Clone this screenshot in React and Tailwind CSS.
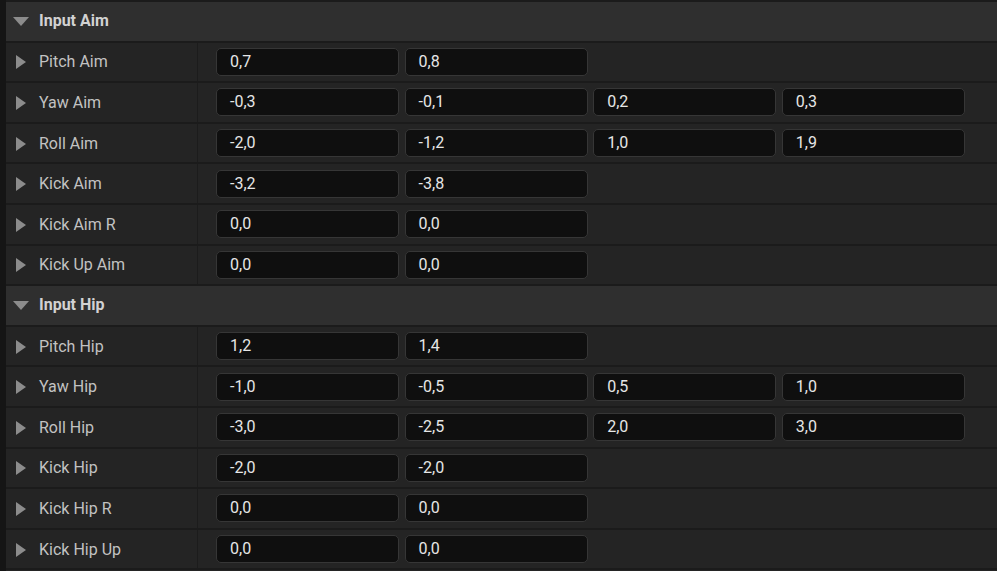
import React from "react";

const sections = [
  {
    title: "Input Aim",
    rows: [
      ["Pitch Aim", ["0,7", "0,8"]],
      ["Yaw Aim", ["-0,3", "-0,1", "0,2", "0,3"]],
      ["Roll Aim", ["-2,0", "-1,2", "1,0", "1,9"]],
      ["Kick Aim", ["-3,2", "-3,8"]],
      ["Kick Aim R", ["0,0", "0,0"]],
      ["Kick Up Aim", ["0,0", "0,0"]],
    ],
  },
  {
    title: "Input Hip",
    rows: [
      ["Pitch Hip", ["1,2", "1,4"]],
      ["Yaw Hip", ["-1,0", "-0,5", "0,5", "1,0"]],
      ["Roll Hip", ["-3,0", "-2,5", "2,0", "3,0"]],
      ["Kick Hip", ["-2,0", "-2,0"]],
      ["Kick Hip R", ["0,0", "0,0"]],
      ["Kick Hip Up", ["0,0", "0,0"]],
    ],
  },
];

function ArrowRight() {
  return (
    <svg width="10" height="14" viewBox="0 0 10 14" className="shrink-0">
      <path d="M0 0 L10 7 L0 14 Z" fill="#8c8c8c" />
    </svg>
  );
}

function ArrowDown() {
  return (
    <svg width="16" height="9" viewBox="0 0 16 9" className="shrink-0">
      <path d="M0 0 L16 0 L8 9 Z" fill="#8c8c8c" />
    </svg>
  );
}

function NumberBox({ value }) {
  return (
    <div className="w-[183px] h-[28px] shrink-0 rounded-[5px] border border-[#363636] bg-[#0f0f0f] flex items-center pl-[13px] text-[16px] text-[#e6e6e6]">
      {value}
    </div>
  );
}

function SectionHeader({ title }) {
  return (
    <div className="h-[40.6px] shrink-0 bg-[#2f2f2f] border-b-2 border-[#1b1b1b] flex items-center pl-[7px]">
      <ArrowDown />
      <span className="ml-[10px] text-[16px] font-bold text-[#d2d2d2]">{title}</span>
    </div>
  );
}

function PropertyRow({ label, values }) {
  return (
    <div className="h-[40.6px] shrink-0 bg-[#242424] border-b-2 border-[#1b1b1b] flex">
      <div className="w-[192px] shrink-0 flex items-center pl-[10px] pt-px border-r border-[#1c1c1c]">
        <ArrowRight />
        <span className="ml-[13px] text-[16px] text-[#c2c2c2]">{label}</span>
      </div>
      <div className="flex items-center gap-[5.6px] pl-[18px]">
        {values.map((v, i) => (
          <NumberBox key={i} value={v} />
        ))}
      </div>
    </div>
  );
}

export default function App() {
  return (
    <div
      className="w-[997px] h-[571px] overflow-hidden flex bg-[#242424]"
      style={{ fontFamily: "Roboto, 'Noto Sans', sans-serif" }}
    >
      <div className="w-[6px] shrink-0 bg-[#151515]" />
      <div className="flex-1 flex flex-col border-t-2 border-[#1b1b1b]">
        {sections.map((s) => (
          <React.Fragment key={s.title}>
            <SectionHeader title={s.title} />
            {s.rows.map(([label, values]) => (
              <PropertyRow key={label} label={label} values={values} />
            ))}
          </React.Fragment>
        ))}
      </div>
    </div>
  );
}
